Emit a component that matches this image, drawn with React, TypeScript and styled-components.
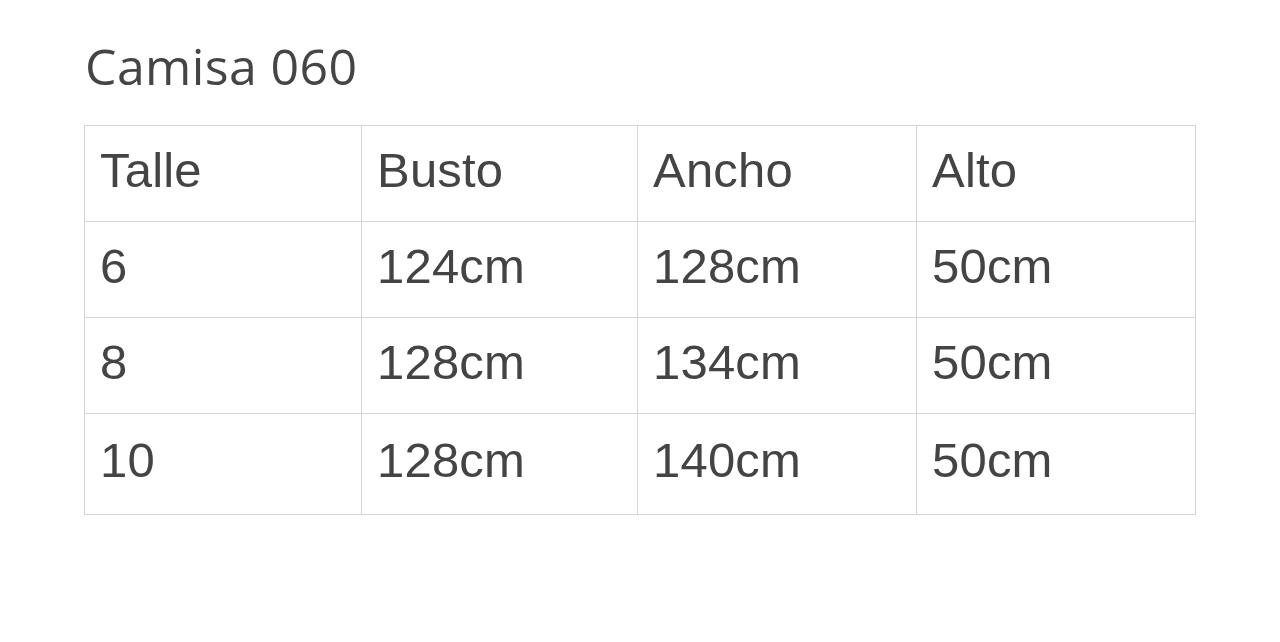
import React from "react";
import styled, { createGlobalStyle } from "styled-components";

const Global = createGlobalStyle`
  html, body { margin: 0; padding: 0; background: #ffffff; }
  body { font-family: "Liberation Sans", Arial, sans-serif; color: #444444; }
`;

const Page = styled.div`
  width: 1280px;
  height: 642px;
  box-sizing: border-box;
  padding: 34px 84px 0 84px;
  display: flex;
  flex-direction: column;
  gap: 27px;
`;

const Title = styled.h1`
  margin: 0;
  padding-left: 1px;
  font-family: "Open Sans", "Liberation Sans", sans-serif;
  font-weight: 400;
  font-size: 50px;
  line-height: 64px;
  color: #454545;
  letter-spacing: 0.4px;
`;

const Table = styled.table`
  width: 1111px;
  border-collapse: collapse;
  table-layout: fixed;
`;

const Cell = styled.td<{ $h: number }>`
  height: ${(p) => p.$h}px;
  box-sizing: border-box;
  border: 1px solid #d6d6d6;
  padding: 0 0 8px 15px;
  font-size: 49px;
  letter-spacing: 0.2px;
  color: #444444;
  vertical-align: middle;
  white-space: nowrap;
`;

const widths = [277, 276, 279, 279];

const rows = [
  ["Talle", "Busto", "Ancho", "Alto"],
  ["6", "124cm", "128cm", "50cm"],
  ["8", "128cm", "134cm", "50cm"],
  ["10", "128cm", "140cm", "50cm"],
];

export default function App() {
  return (
    <>
      <Global />
      <Page>
        <Title>Camisa 060</Title>
        <Table>
          <colgroup>
            {widths.map((w, i) => (
              <col key={i} style={{ width: w }} />
            ))}
          </colgroup>
          <tbody>
            {rows.map((r, i) => (
              <tr key={i}>
                {r.map((c, j) => (
                  <Cell key={j} $h={i === 3 ? 101 : 96}>
                    {c}
                  </Cell>
                ))}
              </tr>
            ))}
          </tbody>
        </Table>
      </Page>
    </>
  );
}
